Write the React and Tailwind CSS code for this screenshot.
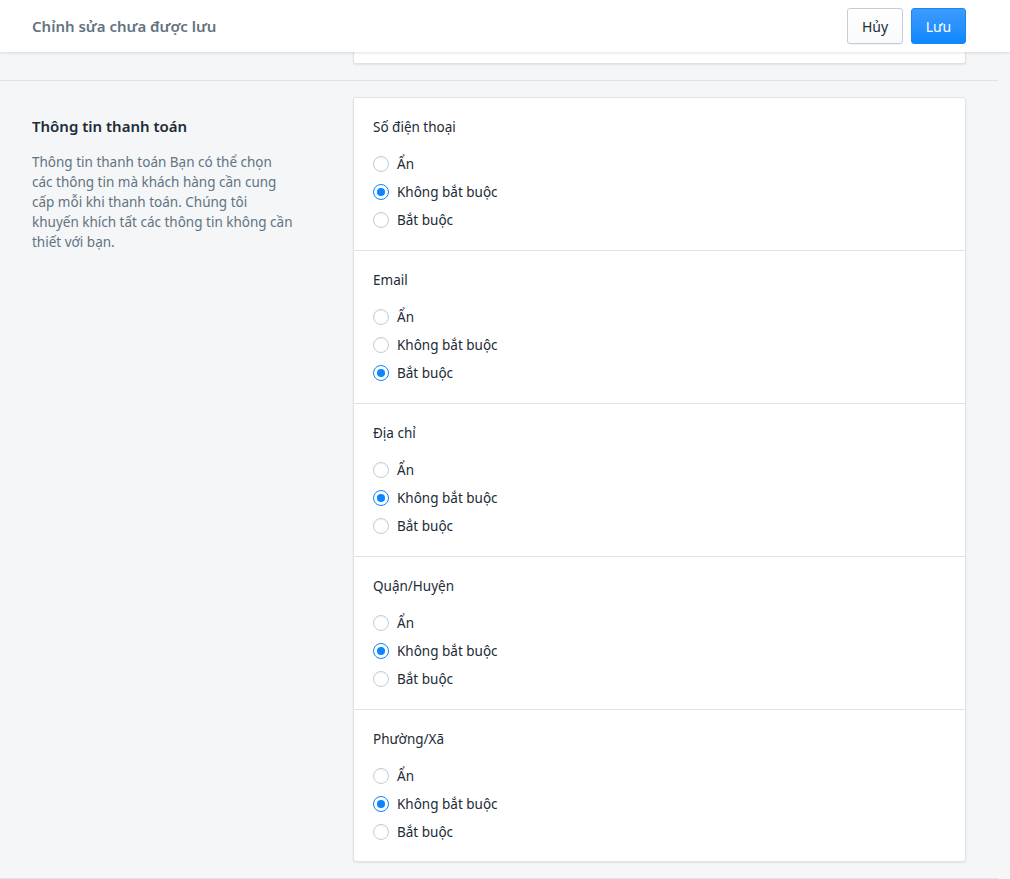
import React from "react";

const groups = [
  { label: "Số điện thoại", value: 1 },
  { label: "Email", value: 2 },
  { label: "Địa chỉ", value: 1 },
  { label: "Quận/Huyện", value: 1 },
  { label: "Phường/Xã", value: 1 },
];
const options = ["Ẩn", "Không bắt buộc", "Bắt buộc"];

function Radio({ checked, label }) {
  return (
    <div className="flex items-center h-[28px]">
      {checked ? (
        <span className="w-[16px] h-[16px] rounded-full border-[1.5px] border-[#0a84ff] flex items-center justify-center bg-white">
          <span className="w-[8px] h-[8px] rounded-full bg-[#0a84ff]" />
        </span>
      ) : (
        <span className="w-[16px] h-[16px] rounded-full border border-[#c4cdd5] bg-white shadow-[inset_0_1px_1px_rgba(0,0,0,0.05)]" />
      )}
      <span className="ml-[8px] text-[13.5px] text-[#212b36]">{label}</span>
    </div>
  );
}

export default function App() {
  return (
    <div
      className="min-h-[879px] bg-[#f4f6f8] w-[1010px]"
      style={{ fontFamily: '"Noto Sans", "Open Sans", sans-serif' }}
    >
      <header className="relative z-10 h-[52px] bg-white shadow-[0_1px_3px_rgba(0,0,0,0.12)] flex items-center justify-between pl-[32px] pr-[44px]">
        <div className="text-[15px] font-semibold text-[#637381]">Chỉnh sửa chưa được lưu</div>
        <div className="flex gap-[8px]">
          <button className="h-[36px] w-[56px] rounded-[3px] border border-[#c4cdd5] bg-gradient-to-b from-white to-[#f9fafb] text-[14px] text-[#212b36] shadow-[0_1px_0_rgba(22,29,37,0.05)]">
            Hủy
          </button>
          <button className="h-[36px] w-[55px] rounded-[3px] border border-[#1a86f0] bg-gradient-to-b from-[#3d9bff] to-[#0788ff] text-[14px] text-white">
            Lưu
          </button>
        </div>
      </header>
      <div className="w-[998px]">
        <div className="border-b border-[#dfe3e8] px-[32px] pb-[16px]">
          <div className="ml-[321px] h-[12px] bg-white rounded-b-[3px] border-x border-b border-[#dfe3e8] shadow-[0_1px_2px_rgba(63,63,68,0.1)]" />
        </div>
        <div className="border-b border-[#dfe3e8] px-[32px] py-[16px] flex">
          <div className="w-[289px] pt-[17px]">
            <h2 className="text-[15px] leading-[24px] font-semibold text-[#212b36]">Thông tin thanh toán</h2>
            <p className="mt-[14px] w-[263px] text-[13.5px] leading-[20px] text-[#637381]">
              Thông tin thanh toán Bạn có thể chọn các thông tin mà khách hàng cần cung cấp mỗi khi thanh toán. Chúng tôi khuyến khích tất các thông tin không cần thiết với bạn.
            </p>
          </div>
          <div className="ml-[32px] flex-1 bg-white rounded-[3px] border border-[#dfe3e8] shadow-[0_1px_2px_rgba(63,63,68,0.1)]">
            {groups.map((g, i) => (
              <div
                key={g.label}
                className={`pl-[19px] pr-[20px] pt-[19px] ${i < groups.length - 1 ? "pb-[16px] border-b border-[#dfe3e8]" : "pb-[15px]"}`}
              >
                <div className="text-[13.5px] leading-[20px] text-[#212b36]">{g.label}</div>
                <div className="mt-[13px]">
                  {options.map((o, j) => (
                    <Radio key={o} label={o} checked={j === g.value} />
                  ))}
                </div>
              </div>
            ))}
          </div>
        </div>
      </div>
    </div>
  );
}
